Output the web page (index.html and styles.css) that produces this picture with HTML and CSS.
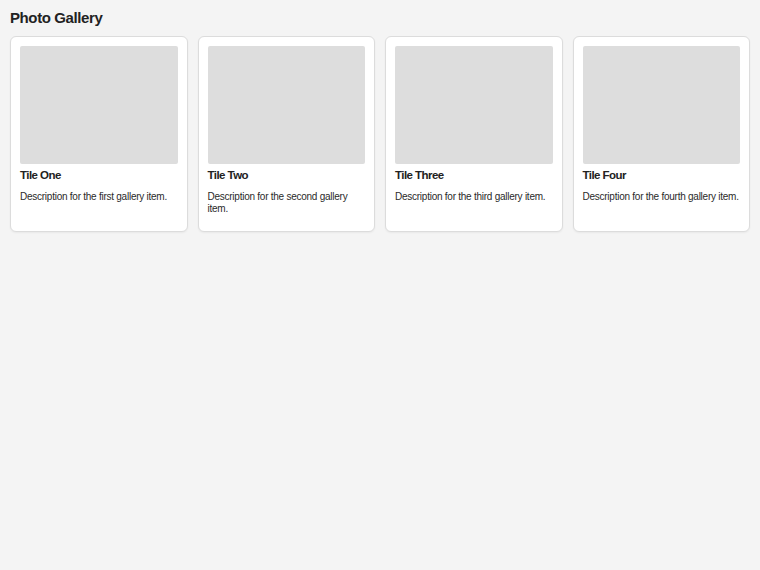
FILE: index.html
```html
<!DOCTYPE html>
<html lang="en">
<head>
    <meta charset="UTF-8">
    <meta name="viewport" content="width=device-width, initial-scale=1.0">
    <title>Photo Gallery</title>
    <link rel="stylesheet" href="styles.css">
</head>
<body>
    <h1>Photo Gallery</h1>

    <!-- Gallery tiles -->
    <div class="gallery">
        <div class="tile">
            <div class="photo"></div>
            <h3>Tile One</h3>
            <p>Description for the first gallery item.</p>
        </div>
        <div class="tile">
            <div class="photo"></div>
            <h3>Tile Two</h3>
            <p>Description for the second gallery item.</p>
        </div>
        <div class="tile">
            <div class="photo"></div>
            <h3>Tile Three</h3>
            <p>Description for the third gallery item.</p>
        </div>
        <div class="tile">
            <div class="photo"></div>
            <h3>Tile Four</h3>
            <p>Description for the fourth gallery item.</p>
        </div>
    </div>
</body>
</html>
```

FILE: styles.css
```css
body {
    margin: 0;
    padding: 9px 10px 10px;
    background: #f4f4f4;
    font-family: "Liberation Sans", Arial, sans-serif;
    color: #222;
}
h1 {
    font-size: 15px;
    letter-spacing: -0.4px;
    line-height: 18px;
    margin: 0 0 9px;
}
.gallery {
    display: grid;
    grid-template-columns: repeat(4, 1fr);
    gap: 10px;
}
.tile {
    background: white;
    border: 1px solid #dcdcdc;
    border-radius: 6px;
    padding: 9px 9px 16px;
    box-shadow: 0 1px 2px rgba(0, 0, 0, 0.05);
}
.photo {
    height: 118px;
    background: #ddd;
    border-radius: 2px;
}
.tile h3 {
    font-size: 11.5px;
    letter-spacing: -0.55px;
    margin: 5px 0 0;
}
.tile p {
    font-size: 10px;
    letter-spacing: -0.25px;
    line-height: 12px;
    margin: 10px -4px 0 0;
    color: #2a2a2a;
}
```
